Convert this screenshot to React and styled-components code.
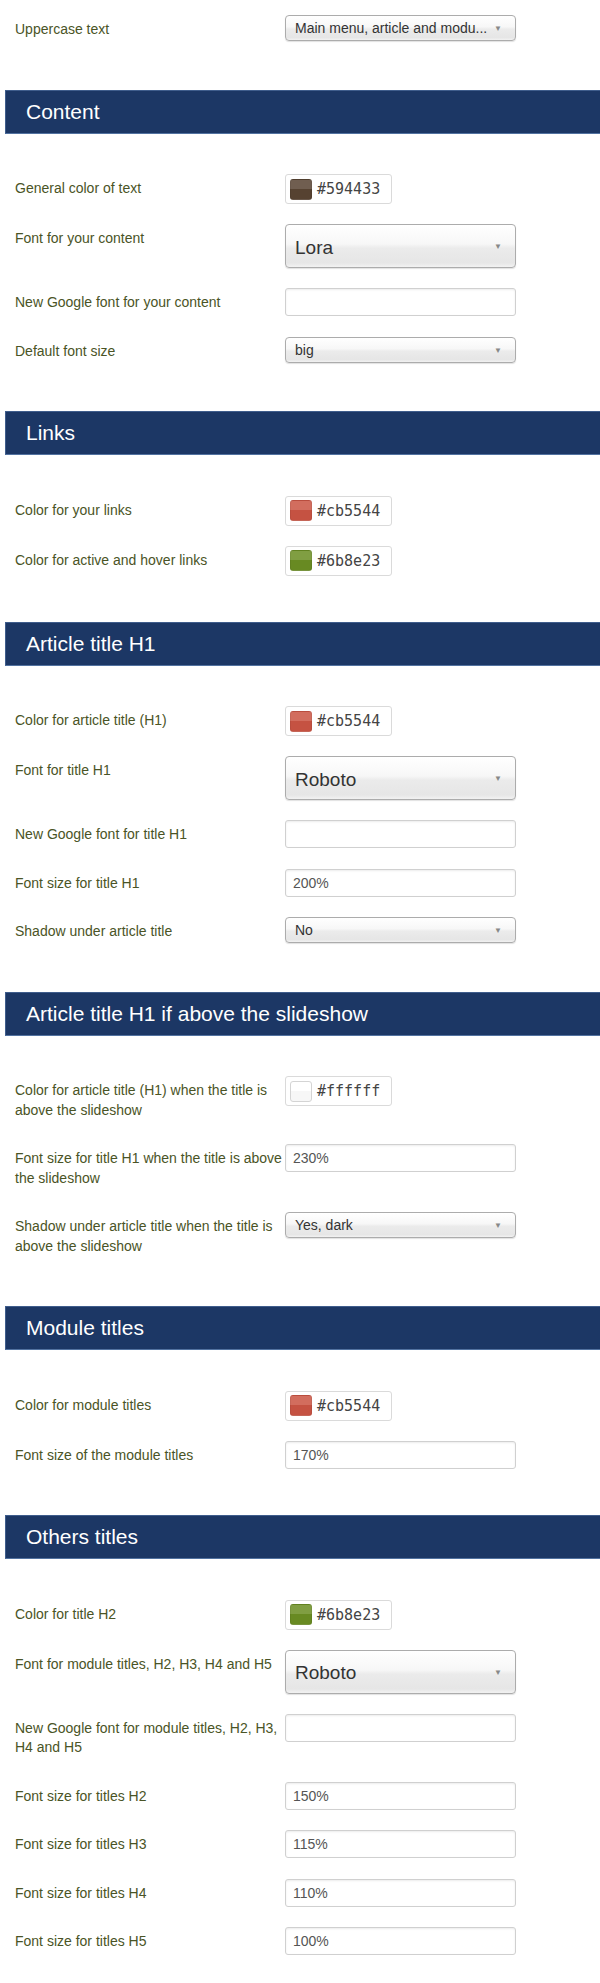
import React from 'react'
import styled, { createGlobalStyle } from 'styled-components'

const GlobalStyle = createGlobalStyle`
    html, body {
        margin: 0;
        padding: 0;
        background: #fff;
    }
    body {
        font-family: "Liberation Sans", Arial, Helvetica, sans-serif;
    }
`

const Page = styled.div`
    width: 600px;
    padding: 15px 0 30px;
    box-sizing: border-box;
    overflow: hidden;
`

const Section = styled.section`
    display: flex;
    flex-direction: column;
`

const SectionHeader = styled.h2`
    margin: 26px 0 40.5px 5px;
    height: 44px;
    box-sizing: border-box;
    display: flex;
    align-items: center;
    padding-left: 20px;
    background: #1c3765;
    border-top: 1px solid #3f5d8c;
    border-bottom: 1px solid #5272a0;
    border-left: 1px solid #3f5d8c;
    color: #fff;
    font-size: 21px;
    font-weight: normal;
    font-family: "Liberation Sans", Arial, sans-serif;
`

const Row = styled.div`
    display: grid;
    grid-template-columns: 270px 231px;
    align-items: start;
    padding-left: 15px;
    margin-bottom: 20px;
`

const Label = styled.label`
    padding: 5px 1px 4px 0;
    font-size: 14px;
    line-height: 19.5px;
    color: #4a5426;
`

const SelectBox = styled.div`
    position: relative;
    height: ${p => (p.$big ? '44px' : '26px')};
    box-sizing: border-box;
    display: flex;
    align-items: center;
    padding: ${p => (p.$big ? '3px 26px 0 9px' : '0 26px 0 9px')};
    border: 1px solid #acacac;
    border-radius: 4px;
    background: linear-gradient(to bottom, #ffffff 0%, #f7f7f7 45%, #ebebeb 55%, #e6e6e6 90%, #f2f2f2 100%);
    box-shadow: 0 1px 1px rgba(0, 0, 0, 0.12);
    color: #333;
    font-size: ${p => (p.$big ? '19px' : '14px')};
    white-space: nowrap;
    overflow: hidden;
`

const Arrow = styled.span`
    position: absolute;
    right: 13px;
    top: 50%;
    transform: translateY(-50%);
    font-size: 8px;
    color: #888;
`

const TextField = styled.input`
    width: 231px;
    height: 28px;
    box-sizing: border-box;
    padding: 0 7px;
    border: 1px solid #d0d0d0;
    border-radius: 3px;
    box-shadow: inset 0 1px 2px rgba(0, 0, 0, 0.08);
    background: #fff;
    color: #555;
    font-family: "Liberation Sans", Arial, sans-serif;
    font-size: 14px;
    outline: none;
`

const ColorField = styled.div`
    width: 107px;
    height: 30px;
    box-sizing: border-box;
    display: flex;
    align-items: center;
    gap: 5px;
    padding-left: 4px;
    border: 1px solid #dadada;
    border-radius: 3px;
    background: #fff;
`

const Swatch = styled.span`
    width: 22px;
    height: 21px;
    box-sizing: border-box;
    border-radius: 3px;
    background:
        linear-gradient(to bottom, rgba(255, 255, 255, 0.14) 0 45%, rgba(0, 0, 0, 0.03) 45% 100%),
        ${p => p.$color};
    border: ${p => (p.$color === '#ffffff' ? '1px solid #d4d4d4' : '1px solid rgba(0,0,0,0.06)')};
`

const HexText = styled.span`
    font-family: "DejaVu Sans Mono", "Liberation Mono", monospace;
    font-size: 15px;
    color: #444;
`

const sections = [
    {
        rows: [{ label: 'Uppercase text', type: 'select', value: 'Main menu, article and modu...' }],
    },
    {
        title: 'Content',
        rows: [
            { label: 'General color of text', type: 'color', value: '#594433' },
            { label: 'Font for your content', type: 'big', value: 'Lora' },
            { label: 'New Google font for your content', type: 'input', value: '' },
            { label: 'Default font size', type: 'select', value: 'big' },
        ],
    },
    {
        title: 'Links',
        rows: [
            { label: 'Color for your links', type: 'color', value: '#cb5544' },
            { label: 'Color for active and hover links', type: 'color', value: '#6b8e23' },
        ],
    },
    {
        title: 'Article title H1',
        rows: [
            { label: 'Color for article title (H1)', type: 'color', value: '#cb5544' },
            { label: 'Font for title H1', type: 'big', value: 'Roboto' },
            { label: 'New Google font for title H1', type: 'input', value: '' },
            { label: 'Font size for title H1', type: 'input', value: '200%' },
            { label: 'Shadow under article title', type: 'select', value: 'No' },
        ],
    },
    {
        title: 'Article title H1 if above the slideshow',
        rows: [
            { label: 'Color for article title (H1) when the title is above the slideshow', type: 'color', value: '#ffffff' },
            { label: 'Font size for title H1 when the title is above the slideshow', type: 'input', value: '230%' },
            { label: 'Shadow under article title when the title is above the slideshow', type: 'select', value: 'Yes, dark' },
        ],
    },
    {
        title: 'Module titles',
        rows: [
            { label: 'Color for module titles', type: 'color', value: '#cb5544' },
            { label: 'Font size of the module titles', type: 'input', value: '170%' },
        ],
    },
    {
        title: 'Others titles',
        rows: [
            { label: 'Color for title H2', type: 'color', value: '#6b8e23' },
            { label: 'Font for module titles, H2, H3, H4 and H5', type: 'big', value: 'Roboto' },
            { label: 'New Google font for module titles, H2, H3, H4 and H5', type: 'input', value: '' },
            { label: 'Font size for titles H2', type: 'input', value: '150%' },
            { label: 'Font size for titles H3', type: 'input', value: '115%' },
            { label: 'Font size for titles H4', type: 'input', value: '110%' },
            { label: 'Font size for titles H5', type: 'input', value: '100%' },
        ],
    },
]

function Control({ type, value }) {
    if (type === 'color') {
        return (
            <ColorField>
                <Swatch $color={value} />
                <HexText>{value}</HexText>
            </ColorField>
        )
    }
    if (type === 'input') {
        return <TextField type="text" value={value} readOnly />
    }
    return (
        <SelectBox $big={type === 'big'}>
            {value}
            <Arrow>▼</Arrow>
        </SelectBox>
    )
}

export default function App() {
    return (
        <Page>
            <GlobalStyle />
            {sections.map((section, i) => (
                <Section key={i}>
                    {section.title && <SectionHeader>{section.title}</SectionHeader>}
                    {section.rows.map(row => (
                        <Row key={row.label}>
                            <Label>{row.label}</Label>
                            <Control type={row.type} value={row.value} />
                        </Row>
                    ))}
                </Section>
            ))}
        </Page>
    )
}
